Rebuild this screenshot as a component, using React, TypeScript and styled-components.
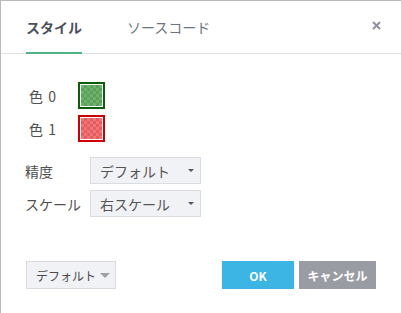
import React, { useState } from "react";
import styled, { createGlobalStyle } from "styled-components";

const GlobalStyle = createGlobalStyle`
  html, body {
    margin: 0;
    padding: 0;
    background: #ffffff;
  }
  body {
    font-family: "Noto Sans CJK JP", "Noto Sans", "Liberation Sans", sans-serif;
  }
`;

const Dialog = styled.div`
  width: 401px;
  height: 313px;
  box-sizing: border-box;
  border-left: 1px solid #b9b9b9;
  border-top: 1px solid #b9b9b9;
  display: flex;
  flex-direction: column;
  background: #fff;
`;

const Header = styled.div`
  height: 52px;
  display: flex;
  padding-left: 25px;
  padding-right: 20px;
  border-bottom: 1px solid #dfe1e5;
`;

const Tab = styled.div<{ $active?: boolean }>`
  display: flex;
  align-items: center;
  margin-bottom: -1px;
  margin-right: 45px;
  font-size: 14px;
  font-weight: ${(p) => (p.$active ? 700 : 400)};
  color: ${(p) => (p.$active ? "#4a4f5c" : "#6e7380")};
  border-bottom: 2px solid ${(p) => (p.$active ? "#4fb584" : "transparent")};
  cursor: pointer;
`;

const Close = styled.div`
  margin-left: auto;
  display: flex;
  align-items: center;
  padding-bottom: 4px;
  color: #8e919a;
`;

const Body = styled.div`
  display: flex;
  flex-direction: column;
  padding: 28px 0 0 24px;
`;

const ColorRows = styled.div`
  display: flex;
  flex-direction: column;
  gap: 6px;
  padding-left: 4px;
  margin-bottom: 15px;
`;

const Row = styled.div`
  display: flex;
  align-items: center;
  height: 27px;
`;

const ColorLabel = styled.div`
  width: 49px;
  font-size: 14px;
  color: #505050;
  word-spacing: 2px;
`;

const Swatch = styled.div<{ $edge: string; $a: string; $b: string }>`
  width: 27px;
  height: 27px;
  box-sizing: border-box;
  border: 2px solid ${(p) => p.$edge};
  padding: 1px;
  background: #fff;
  &::after {
    content: "";
    display: block;
    width: 100%;
    height: 100%;
    background-color: ${(p) => p.$a};
    background-image: conic-gradient(
      ${(p) => p.$b} 25%,
      transparent 0 50%,
      ${(p) => p.$b} 0 75%,
      transparent 0
    );
    background-size: 6px 6px;
  }
`;

const SelectRows = styled.div`
  display: flex;
  flex-direction: column;
  gap: 6px;
`;

const SelectLabel = styled.div`
  width: 65px;
  font-size: 14px;
  color: #505050;
`;

const Select = styled.div`
  width: 111px;
  height: 27px;
  box-sizing: border-box;
  display: flex;
  align-items: center;
  padding: 0 6px 0 9px;
  background: #f1f2f6;
  border: 1px solid #dadce1;
  font-size: 14px;
  color: #555;
`;

const Caret = styled.span<{ $w: number; $c: string }>`
  margin-left: auto;
  width: 0;
  height: 0;
  border-left: ${(p) => p.$w / 2}px solid transparent;
  border-right: ${(p) => p.$w / 2}px solid transparent;
  border-top: ${(p) => Math.round(p.$w / 2)}px solid ${(p) => p.$c};
`;

const Footer = styled.div`
  margin-top: auto;
  display: flex;
  align-items: center;
  padding: 0 25px 24px 25px;
`;

const PresetButton = styled.div`
  width: 90px;
  height: 28px;
  box-sizing: border-box;
  display: flex;
  align-items: center;
  padding: 0 5px 0 9px;
  background: #f1f2f6;
  border: 1px solid #d9dbe0;
  font-size: 12px;
  color: #4a4a4a;
`;

const ActionButton = styled.button<{ $bg: string; $w: number }>`
  width: ${(p) => p.$w}px;
  height: 28px;
  border: none;
  background: ${(p) => p.$bg};
  color: #fff;
  font-family: inherit;
  font-size: 12px;
  font-weight: 700;
  padding: 0;
  cursor: pointer;
`;

const Actions = styled.div`
  margin-left: auto;
  display: flex;
  gap: 5px;
`;

export default function App() {
  const [tab, setTab] = useState(0);
  return (
    <>
      <GlobalStyle />
      <Dialog>
        <Header>
          <Tab $active={tab === 0} onClick={() => setTab(0)}>
            スタイル
          </Tab>
          <Tab $active={tab === 1} onClick={() => setTab(1)}>
            ソースコード
          </Tab>
          <Close>
            <svg width="9" height="9" viewBox="0 0 9 9">
              <path d="M1 1L8 8M8 1L1 8" stroke="currentColor" strokeWidth="2" />
            </svg>
          </Close>
        </Header>
        <Body>
          <ColorRows>
            <Row>
              <ColorLabel>色 0</ColorLabel>
              <Swatch $edge="#0b5c0b" $a="#6cb26c" $b="#5a9f5a" />
            </Row>
            <Row>
              <ColorLabel>色 1</ColorLabel>
              <Swatch $edge="#cc0000" $a="#f27474" $b="#e06060" />
            </Row>
          </ColorRows>
          <SelectRows>
            <Row>
              <SelectLabel>精度</SelectLabel>
              <Select>
                デフォルト
                <Caret $w={6} $c="#555" />
              </Select>
            </Row>
            <Row>
              <SelectLabel>スケール</SelectLabel>
              <Select>
                右スケール
                <Caret $w={6} $c="#555" />
              </Select>
            </Row>
          </SelectRows>
        </Body>
        <Footer>
          <PresetButton>
            デフォルト
            <Caret $w={10} $c="#a0a0a0" />
          </PresetButton>
          <Actions>
            <ActionButton $bg="#3cb4e4" $w={72}>
              OK
            </ActionButton>
            <ActionButton $bg="#9a9ca3" $w={77}>
              キャンセル
            </ActionButton>
          </Actions>
        </Footer>
      </Dialog>
    </>
  );
}
